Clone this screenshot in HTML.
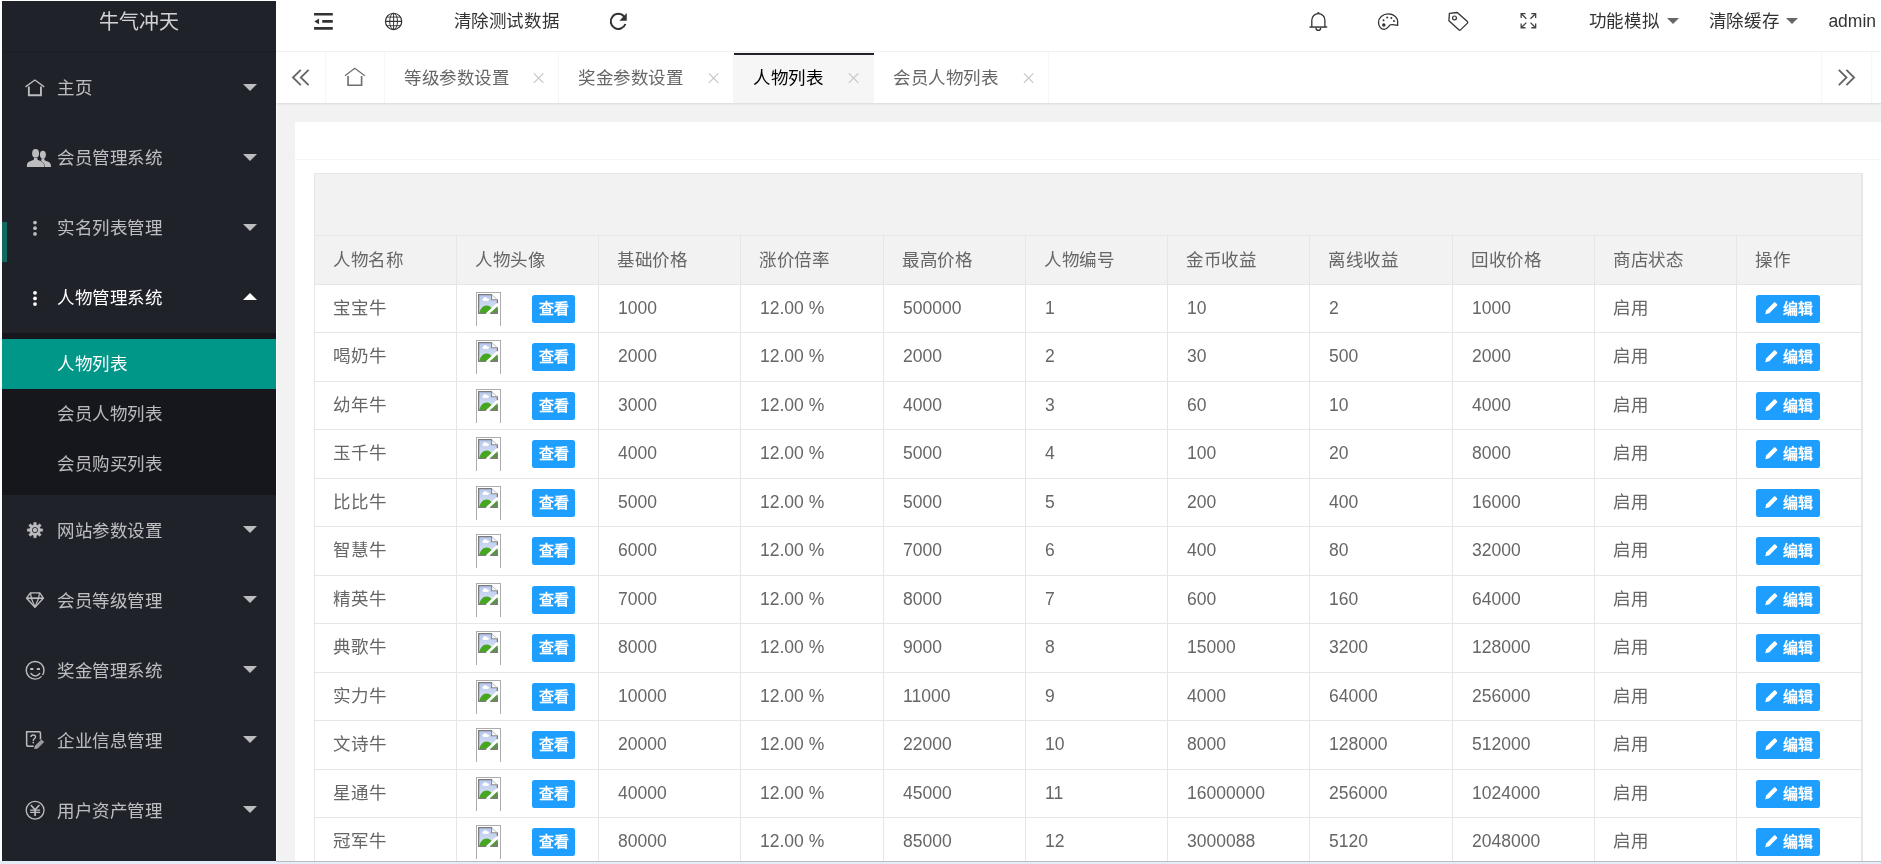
<!DOCTYPE html>
<html lang="zh-CN">
<head>
<meta charset="utf-8">
<title>人物列表</title>
<style>
*{box-sizing:border-box;margin:0;padding:0}
html,body{width:1881px;height:864px;overflow:hidden;background:#fff}
body{position:relative;font-family:"Liberation Sans",sans-serif;font-size:17.5px;color:#666;line-height:1;white-space:nowrap}
div,span,a,b,i{position:absolute;display:block;white-space:nowrap}
svg{position:absolute;display:block;overflow:visible}
.j{text-align:justify;text-align-last:justify}
.ov{left:0;top:0}
#side,#head,#tabs,#tbl{will-change:transform}
/* sidebar */
#side{z-index:4;left:2px;top:1px;width:274px;height:860px;background:#20222a;overflow:hidden}
#logo{left:0;top:0;width:274px;height:50px;font-size:20px;color:rgba(255,255,255,.8);box-shadow:0 1px 2px 0 rgba(0,0,0,.15)}
#logo .lt{left:96.7px;top:0;height:40px;line-height:40px}
.ni{left:0;width:274px;height:70px;color:rgba(255,255,255,.7)}
.ni .t{left:55px;top:0;height:70px;line-height:70px}
.ni .ar{left:240.8px;top:31.6px;width:0;height:0;border:7px solid transparent;border-top-color:rgba(255,255,255,.7);border-bottom-width:0}
.ni.open{color:#fff}
.ni.open .ar{top:31.2px;border:7px solid transparent;border-bottom-color:#fff;border-top-width:0}
#bar{left:0;top:221px;width:5px;height:40px;background:#14695f}
#child{left:0;top:331.5px;width:274px;height:162px;background:rgba(0,0,0,.3)}
.ci{left:0;width:274px;height:50px;line-height:50px;color:rgba(255,255,255,.7)}
.ci .t{left:55px;top:0;height:50px;line-height:50px}
.ci.on{background:#009688;color:#fff}
/* header */
#head{z-index:3;left:276px;top:0;width:1605px;height:52px;background:#fff;border-bottom:1px solid #f0f0f0;color:#333}
#head .t{top:0;height:42px;line-height:42px;color:#333}
.dar{top:17.9px;width:0;height:0;border:6.8px solid transparent;border-top-color:#666;border-bottom-width:0}
/* tabs */
#tabs{z-index:2;left:276px;top:52px;width:1605px;height:51px;background:#fff;box-shadow:0 1px 2px 0 rgba(0,0,0,.1)}
.tb{top:0;height:51px;border-right:1px solid #f6f6f6}
.tb .t{top:0;height:51px;line-height:51px;left:19px;color:#666}
.tb.on{background:#f6f6f6;border-right:0}
.tb.on .t{color:#000}
.tb.on .ln{left:0;top:1px;width:100%;height:2px;background:#20222a}
/* body */
#bg{left:277px;top:103px;width:1604px;height:758px;background:#f2f2f2}
#card{left:295px;top:122px;width:1586px;height:739px;background:#fff}
#chd{left:0;top:0;width:1586px;height:38px;border-bottom:1px solid #f6f6f6}
#tbl{left:314px;top:173px;width:1549px;height:700px;border:1px solid #e6e6e6;border-right-width:2px;background:#fff}
#tool{left:0;top:0;width:1546px;height:62px;background:#f2f2f2;border-bottom:1px solid #e6e6e6}
#thead{left:0;top:62px;width:1546px;height:49px;background:#f2f2f2;border-bottom:1px solid #e6e6e6}
.c{top:0;height:100%;border-right:1px solid #e6e6e6}
.c .t{left:19px;top:0;height:100%}
.c .j{left:18px}
#thead .t{line-height:49px}
.r{left:0;width:1546px;border-bottom:1px solid #e6e6e6}
.r .t{line-height:47px}
.btn{background:#1e9fff;color:#fff;border-radius:2.5px;font-size:15px;height:28px;line-height:28px;top:10px;font-weight:bold}
.bv{left:75px;width:43px}
.bv .t2{left:6.5px;top:0;line-height:28px}
.be{left:19px;width:64px}
.be .t2{left:27px;top:0;line-height:28px}
.img{left:19px;top:7px;width:25px;height:34px;border:1px solid #acacac;border-bottom:0;overflow:hidden}
/* bottom band */
#bot{left:0;top:861px;width:1881px;height:3px;background:#e4ecf7}
#botl{left:276px;top:861px;width:1605px;height:1px;background:#b9bdc3}
#wl{left:276px;top:103px;width:1px;height:758px;background:#fcfcfc}
.ni .j{margin-top:1px}
#logo .j{margin-top:.5px}
.tb .j{margin-top:1px}
</style>
</head>
<body>
<svg width="0" height="0"><defs><linearGradient id="sky" x1="0" y1="0" x2="0" y2="1"><stop offset="0" stop-color="#b4c7ec"/><stop offset="1" stop-color="#dfe6f6"/></linearGradient></defs></svg>
<div id="side">
<div id="logo"><span class="lt j" style="width:80px;">牛气冲天</span></div>
<div class="ni" style="top:51px"><span class="t j" style="width:35px;">主页</span><i class="ar"></i></div>
<div class="ni" style="top:121px"><span class="t j" style="width:105px;">会员管理系统</span><i class="ar"></i></div>
<div class="ni" style="top:191px"><span class="t j" style="width:105px;">实名列表管理</span><i class="ar"></i></div>
<div class="ni open" style="top:261px"><span class="t j" style="width:105px;">人物管理系统</span><i class="ar"></i></div>
<div class="ni" style="top:493.5px"><span class="t j" style="width:105px;">网站参数设置</span><i class="ar"></i></div>
<div class="ni" style="top:563.5px"><span class="t j" style="width:105px;">会员等级管理</span><i class="ar"></i></div>
<div class="ni" style="top:633.5px"><span class="t j" style="width:105px;">奖金管理系统</span><i class="ar"></i></div>
<div class="ni" style="top:703.5px"><span class="t j" style="width:105px;">企业信息管理</span><i class="ar"></i></div>
<div class="ni" style="top:773.5px"><span class="t j" style="width:105px;">用户资产管理</span><i class="ar"></i></div>
<div id="child">
<div class="ci on" style="top:6.5px"><span class="t j" style="width:70px;">人物列表</span></div>
<div class="ci" style="top:56.5px"><span class="t j" style="width:105px;">会员人物列表</span></div>
<div class="ci" style="top:106.5px"><span class="t j" style="width:105px;">会员购买列表</span></div>
</div>
<div id="bar"></div>
<svg class="ov" width="274" height="860" viewBox="2 1 274 860"><path d="M25.5 86.9 L34.85 80.05 L44.2 86.9" fill="none" stroke="#bdbdbf" stroke-width="1.35"/><path d="M28.85 86.5 V95.2 H40.95 V86.5" fill="none" stroke="#bdbdbf" stroke-width="1.85"/><g transform="translate(26.9 149.1)" fill="#bdbdbf"><ellipse cx="16" cy="5.5" rx="3" ry="3.95"/><path d="M8 18 C8 15 9 13.6 11 12.8 L14 11.6 C14.8 11.2 14.7 10.2 14.4 9.2 L17.7 9.2 C17.4 10.2 17.4 11.1 18.2 11.5 L21.3 12.7 C23.4 13.6 24.1 15 24.1 18 Z"/></g><g transform="translate(26.9 149.1)" fill="#bdbdbf" stroke="#20222a" stroke-width="0.9" paint-order="stroke"><ellipse cx="8.7" cy="4.3" rx="3.45" ry="4.3"/><path d="M0.05 18 C0.05 14.7 0.3 13.5 2.6 12.5 L6.4 11 C7.2 10.6 7.2 9.6 6.9 8.4 L10.6 8.4 C10.3 9.6 10.4 10.6 11.2 11 L13.6 11.9 C15.9 12.9 17.3 14.5 17.45 18 Z"/></g><circle cx="35" cy="222.6" r="1.88" fill="#bdbdbf"/><circle cx="35" cy="228.2" r="1.88" fill="#bdbdbf"/><circle cx="35" cy="233.9" r="1.88" fill="#bdbdbf"/><circle cx="35" cy="292.8" r="1.88" fill="#fff"/><circle cx="35" cy="298.4" r="1.88" fill="#fff"/><circle cx="35" cy="304.1" r="1.88" fill="#fff"/><path d="M33.73 524.8 L33.79 522.45 L36.21 522.45 L36.27 524.8 L37.85 525.45 L39.56 523.83 L41.27 525.54 L39.65 527.25 L40.3 528.83 L42.65 528.89 L42.65 531.31 L40.3 531.37 L39.65 532.95 L41.27 534.66 L39.56 536.37 L37.85 534.75 L36.27 535.4 L36.21 537.75 L33.79 537.75 L33.73 535.4 L32.15 534.75 L30.44 536.37 L28.73 534.66 L30.35 532.95 L29.7 531.37 L27.35 531.31 L27.35 528.89 L29.7 528.83 L30.35 527.25 L28.73 525.54 L30.44 523.83 L32.15 525.45Z" fill="#bdbdbf" stroke="#bdbdbf" stroke-width="0.5" stroke-linejoin="round"/><circle cx="35" cy="530.1" r="2.65" fill="none" stroke="#20222a" stroke-width="0.85"/><path d="M30.4 592.85 H39.7 L43.4 598.2 L34.95 607.3 L26.6 598.2 Z" fill="none" stroke="#bdbdbf" stroke-width="1.35" stroke-linejoin="round"/><path d="M26.8 598.2 H43.2" fill="none" stroke="#bdbdbf" stroke-width="1.7"/><path d="M31.3 598.2 L34.95 606.9 L38.6 598.2" fill="none" stroke="#bdbdbf" stroke-width="1.25" stroke-linejoin="round"/><path d="M30.6 593 L31.3 598.2 M39.5 593 L38.6 598.2" fill="none" stroke="#bdbdbf" stroke-width="1.25"/><circle cx="35.1" cy="670.3" r="8.85" fill="none" stroke="#bdbdbf" stroke-width="1.4" stroke-dasharray="54.01 1.6" stroke-dashoffset="-6.67"/><rect x="30.200000000000003" y="668" width="3.2" height="1.95" rx="0.5" fill="#bdbdbf"/><rect x="36.800000000000004" y="668" width="3.2" height="1.95" rx="0.5" fill="#bdbdbf"/><path d="M31 673.5 Q35.300000000000004 678.5 39.7 673.5" fill="none" stroke="#bdbdbf" stroke-width="1.4" stroke-linecap="round"/><path d="M26.65 731.65 H39.1 Q40.45 731.65 40.45 733 V739.4" fill="none" stroke="#bdbdbf" stroke-width="1.5"/><path d="M26.65 731 V744.4 Q26.65 746.3 28.55 746.3 H33.7" fill="none" stroke="#bdbdbf" stroke-width="1.5"/><path d="M30.95 736.9 Q30.95 734.95 33.25 734.95 Q35.55 734.95 35.55 736.85 Q35.55 738 34.3 738.8 Q33.25 739.5 33.25 740.9" fill="none" stroke="#bdbdbf" stroke-width="1.35"/><circle cx="33.25" cy="742.6" r="0.85" fill="#bdbdbf"/><path d="M34.1 749.1 L35.1 745.8 L41.5 739.5 L44.1 742.1 L37.6 748.5 Z" fill="#bdbdbf" fill-opacity=".88"/><path d="M36.3 746.6 L42.4 740.5 M37.4 747.7 L43.4 741.7" fill="none" stroke="#20222a" stroke-width="0.45" stroke-opacity=".55"/><circle cx="35.1" cy="810.25" r="8.9" fill="none" stroke="#bdbdbf" stroke-width="1.3"/><path d="M30.8 804.95 L35.1 809.85 L39.4 804.95" fill="none" stroke="#bdbdbf" stroke-width="1.6"/><path d="M35.1 809.65 V816.05" fill="none" stroke="#bdbdbf" stroke-width="1.7"/><path d="M30.1 810.15 H40.1 M30.1 812.35 H40.1" fill="none" stroke="#bdbdbf" stroke-width="1.25"/></svg>
</div>
<div id="head">
<span class="t j" style="width:105px;left:177.7px">清除测试数据</span><span class="t j" style="width:70px;left:1312.5px">功能模拟</span><i class="dar" style="left:1390.5px"></i><span class="t j" style="width:70px;left:1432.6px">清除缓存</span><i class="dar" style="left:1510.4px"></i><span class="t" style="left:1552.4px">admin</span>
<svg class="ov" width="1605" height="52" viewBox="276 0 1605 52"><path d="M314.05 14.2 H332.8 M322.25 21.35 H332.8 M314.05 28.4 H332.8" fill="none" stroke="#333" stroke-width="2.65"/><path d="M314.3 21.45 L319.05 18.6 V24.2 Z" fill="#333"/><g fill="none" stroke="#333" stroke-width="1.2"><circle cx="393.6" cy="21.4" r="8.15"/><ellipse cx="393.6" cy="21.4" rx="3.9" ry="8.15" stroke-width="1"/><path d="M393.6 13.249999999999998 V29.549999999999997" stroke-width="1"/><path d="M385.45000000000005 21.4 H401.75" stroke-width="1.25"/><path d="M386.70000000000005 17.099999999999998 H400.5 M386.70000000000005 25.7 H400.5" stroke-width="0.9"/></g><path d="M625.4 23.98 A7.55 7.55 0 1 1 624.08 16.55" fill="none" stroke="#333" stroke-width="2"/><path d="M619.4 20.65 L626.75 20.65 L626.75 13.1 Z" fill="#333"/><g transform="translate(1309.4 12.2)" fill="none" stroke="#333" stroke-width="1.3"><path d="M2.4 14.8 V8 A6.55 6.55 0 0 1 15.5 8 V14.8"/><path d="M0.1 14.85 H17.8" stroke-width="1.45"/><path d="M6.6 15.5 A2.35 2.7 0 0 0 11.3 15.5"/><path d="M8.95 0 V1.6" stroke-width="1.9"/></g><g transform="translate(1377.8 13.2)"><path fill="none" stroke="#333" stroke-width="1.3" d="M19.8 9.6 C20.4 5 16.5 0.7 10.6 0.7 C4.7 0.7 0.7 4.6 0.7 9.3 C0.7 13.2 3.2 16.1 6.4 16.1 C9.7 16.1 10.4 13.4 12.2 11.9 C14 10.5 16.2 11.9 19.8 12.2 Z"/><circle cx="6" cy="11.9" r="1.75" fill="#333"/><circle cx="5.7" cy="7.1" r="1" fill="#333"/><circle cx="9.4" cy="4.2" r="1" fill="#333"/><circle cx="13.6" cy="4.7" r="1" fill="#333"/><circle cx="16.2" cy="7.9" r="1" fill="#333"/></g><g transform="translate(1448.2 11.8)" fill="none" stroke="#333"><path stroke-width="1.3" stroke-linejoin="round" d="M1.2 1.5 L9 0.7 L19.2 9.8 Q20 10.6 19.3 11.3 L12.3 18.1 Q11.6 18.8 10.9 18.1 L0.7 8.9 Z"/><circle cx="6.3" cy="6.1" r="1.9" stroke-width="1.2"/></g><g transform="translate(1520.5 12.9)" fill="none" stroke="#444" stroke-width="1.3"><path d="M0.65 5 V0.65 H5 M0.9 0.9 L5.8 5.8"/><path d="M10.8 0.65 H15.15 V5 M14.9 0.9 L10 5.8"/><path d="M0.65 10.5 V14.85 H5 M0.9 14.6 L5.8 9.7"/><path d="M15.15 10.5 V14.85 H10.8 M14.9 14.6 L10 9.7"/></g></svg>
</div>
<div id="tabs">
<div class="tb" style="left:0px;width:50px"></div>
<div class="tb" style="left:50px;width:59px"></div>
<div class="tb" style="left:109px;width:174px"><span class="t j" style="width:105px;">等级参数设置</span></div>
<div class="tb" style="left:283px;width:175px"><span class="t j" style="width:105px;">奖金参数设置</span></div>
<div class="tb on" style="left:458px;width:140px"><span class="t j" style="width:70px;">人物列表</span><i class="ln"></i></div>
<div class="tb" style="left:598px;width:175px"><span class="t j" style="width:105px;">会员人物列表</span></div>
<div class="tb" style="left:1545px;width:51px;border-left:1px solid #f6f6f6"></div>
<svg class="ov" width="1605" height="51" viewBox="276 52 1605 51"><path d="M300.8 69.9 L293 77.5 L300.8 85.1 M308.6 69.9 L300.8 77.5 L308.6 85.1" fill="none" stroke="#666" stroke-width="1.85"/><path d="M345 75.75 L354.75 68.35 L364.8 75.75" fill="none" stroke="#6e6e6e" stroke-width="1.2"/><path d="M348.05 76 V85.3 H361.6 V76" fill="none" stroke="#6e6e6e" stroke-width="1.6"/><path d="M1838.8 69.9 L1846.5 77.5 L1838.8 85.1 M1846.3999999999999 69.9 L1854.1 77.5 L1846.3999999999999 85.1" fill="none" stroke="#666" stroke-width="1.85"/><path d="M533.85 73.45 L543.35 82.95 M543.35 73.45 L533.85 82.95" fill="none" stroke="#c6c6c6" stroke-width="1.15"/><path d="M708.85 73.45 L718.35 82.95 M718.35 73.45 L708.85 82.95" fill="none" stroke="#c6c6c6" stroke-width="1.15"/><path d="M848.85 73.45 L858.35 82.95 M858.35 73.45 L848.85 82.95" fill="none" stroke="#c6c6c6" stroke-width="1.15"/><path d="M1023.8499999999999 73.45 L1033.35 82.95 M1033.35 73.45 L1023.8499999999999 82.95" fill="none" stroke="#c6c6c6" stroke-width="1.15"/></svg>
</div>
<div id="wl"></div><div id="bg"></div>
<div id="card"><div id="chd"></div></div>
<div id="tbl">
<div id="tool"></div>
<div id="thead"><div class="c" style="left:0px;width:142px"><span class="t j" style="width:70px;">人物名称</span></div><div class="c" style="left:142px;width:142px"><span class="t j" style="width:70px;">人物头像</span></div><div class="c" style="left:284px;width:142px"><span class="t j" style="width:70px;">基础价格</span></div><div class="c" style="left:426px;width:143px"><span class="t j" style="width:70px;">涨价倍率</span></div><div class="c" style="left:569px;width:142px"><span class="t j" style="width:70px;">最高价格</span></div><div class="c" style="left:711px;width:142px"><span class="t j" style="width:70px;">人物编号</span></div><div class="c" style="left:853px;width:142px"><span class="t j" style="width:70px;">金币收益</span></div><div class="c" style="left:995px;width:143px"><span class="t j" style="width:70px;">离线收益</span></div><div class="c" style="left:1138px;width:142px"><span class="t j" style="width:70px;">回收价格</span></div><div class="c" style="left:1280px;width:142px"><span class="t j" style="width:70px;">商店状态</span></div><div class="c" style="left:1422px;width:126px;border-right:0"><span class="t j" style="width:35px;">操作</span></div></div>
<div class="r" style="top:111px;height:48px"><div class="c" style="left:0px;width:142px"><span class="t j" style="width:52.5px;">宝宝牛</span></div><div class="c" style="left:142px;width:142px"><div class="img"><svg width="20" height="20" viewBox="0 0 20 20" style="left:1px;top:1px"><path d="M0.6 0.6 H13.6 L19.4 5.9 V19.4 H0.6 Z" fill="url(#sky)"/><ellipse cx="7.7" cy="5.7" rx="3.3" ry="1.35" fill="#fff"/><ellipse cx="7.2" cy="4.5" rx="1.9" ry="1.3" fill="#fff"/><path d="M1.2 19.4 C2 14.5 5 11.4 8.6 11.4 C11.4 11.4 13.6 13.2 14.8 15.6 L19.4 12 V19.4 Z" fill="#46a622"/><path d="M13.2 19.4 L19.4 13 V19.4 Z" fill="#5f8f4e"/><path d="M8.6 20.6 L20.4 9.4" stroke="#fff" stroke-width="2.7" fill="none"/><path d="M13.6 0.6 V5.9 H19.4 Z" fill="#fff"/><path d="M13.6 0.3 V5.7 H19.7" fill="none" stroke="#8a8a8a" stroke-width="1.15"/><path d="M13.7 0.7 L19.3 5.8" fill="none" stroke="#b9b9b9" stroke-width="0.9"/><path d="M13.9 0.65 H0.65 V19.35 H8.2" fill="none" stroke="#7b7b7b" stroke-width="1.25"/><path d="M12.4 19.35 H19.35 V14.3 M19.35 5.4 V9.2" fill="none" stroke="#7b7b7b" stroke-width="1.25"/></svg></div><a class="btn bv"><span class="t2 j" style="width:30px;">查看</span></a></div><div class="c" style="left:284px;width:142px"><span class="t">1000</span></div><div class="c" style="left:426px;width:143px"><span class="t">12.00 %</span></div><div class="c" style="left:569px;width:142px"><span class="t">500000</span></div><div class="c" style="left:711px;width:142px"><span class="t">1</span></div><div class="c" style="left:853px;width:142px"><span class="t">10</span></div><div class="c" style="left:995px;width:143px"><span class="t">2</span></div><div class="c" style="left:1138px;width:142px"><span class="t">1000</span></div><div class="c" style="left:1280px;width:142px"><span class="t j" style="width:35px;">启用</span></div><div class="c" style="left:1422px;width:126px;border-right:0"><a class="btn be"><svg width="12.5" height="12.5" viewBox="0 0 12.5 12.5" style="left:9px;top:7.3px"><path fill="#fff" d="M0.2 12.3 L1.3 8.3 L9 0.6 Q9.7 0 10.4 0.6 L12 2.2 Q12.6 2.9 12 3.6 L4.3 11.3 Z"/></svg><span class="t2 j" style="width:30px;">编辑</span></a></div></div>
<div class="r" style="top:159px;height:49px"><div class="c" style="left:0px;width:142px"><span class="t j" style="width:52.5px;">喝奶牛</span></div><div class="c" style="left:142px;width:142px"><div class="img"><svg width="20" height="20" viewBox="0 0 20 20" style="left:1px;top:1px"><path d="M0.6 0.6 H13.6 L19.4 5.9 V19.4 H0.6 Z" fill="url(#sky)"/><ellipse cx="7.7" cy="5.7" rx="3.3" ry="1.35" fill="#fff"/><ellipse cx="7.2" cy="4.5" rx="1.9" ry="1.3" fill="#fff"/><path d="M1.2 19.4 C2 14.5 5 11.4 8.6 11.4 C11.4 11.4 13.6 13.2 14.8 15.6 L19.4 12 V19.4 Z" fill="#46a622"/><path d="M13.2 19.4 L19.4 13 V19.4 Z" fill="#5f8f4e"/><path d="M8.6 20.6 L20.4 9.4" stroke="#fff" stroke-width="2.7" fill="none"/><path d="M13.6 0.6 V5.9 H19.4 Z" fill="#fff"/><path d="M13.6 0.3 V5.7 H19.7" fill="none" stroke="#8a8a8a" stroke-width="1.15"/><path d="M13.7 0.7 L19.3 5.8" fill="none" stroke="#b9b9b9" stroke-width="0.9"/><path d="M13.9 0.65 H0.65 V19.35 H8.2" fill="none" stroke="#7b7b7b" stroke-width="1.25"/><path d="M12.4 19.35 H19.35 V14.3 M19.35 5.4 V9.2" fill="none" stroke="#7b7b7b" stroke-width="1.25"/></svg></div><a class="btn bv"><span class="t2 j" style="width:30px;">查看</span></a></div><div class="c" style="left:284px;width:142px"><span class="t">2000</span></div><div class="c" style="left:426px;width:143px"><span class="t">12.00 %</span></div><div class="c" style="left:569px;width:142px"><span class="t">2000</span></div><div class="c" style="left:711px;width:142px"><span class="t">2</span></div><div class="c" style="left:853px;width:142px"><span class="t">30</span></div><div class="c" style="left:995px;width:143px"><span class="t">500</span></div><div class="c" style="left:1138px;width:142px"><span class="t">2000</span></div><div class="c" style="left:1280px;width:142px"><span class="t j" style="width:35px;">启用</span></div><div class="c" style="left:1422px;width:126px;border-right:0"><a class="btn be"><svg width="12.5" height="12.5" viewBox="0 0 12.5 12.5" style="left:9px;top:7.3px"><path fill="#fff" d="M0.2 12.3 L1.3 8.3 L9 0.6 Q9.7 0 10.4 0.6 L12 2.2 Q12.6 2.9 12 3.6 L4.3 11.3 Z"/></svg><span class="t2 j" style="width:30px;">编辑</span></a></div></div>
<div class="r" style="top:208px;height:48px"><div class="c" style="left:0px;width:142px"><span class="t j" style="width:52.5px;">幼年牛</span></div><div class="c" style="left:142px;width:142px"><div class="img"><svg width="20" height="20" viewBox="0 0 20 20" style="left:1px;top:1px"><path d="M0.6 0.6 H13.6 L19.4 5.9 V19.4 H0.6 Z" fill="url(#sky)"/><ellipse cx="7.7" cy="5.7" rx="3.3" ry="1.35" fill="#fff"/><ellipse cx="7.2" cy="4.5" rx="1.9" ry="1.3" fill="#fff"/><path d="M1.2 19.4 C2 14.5 5 11.4 8.6 11.4 C11.4 11.4 13.6 13.2 14.8 15.6 L19.4 12 V19.4 Z" fill="#46a622"/><path d="M13.2 19.4 L19.4 13 V19.4 Z" fill="#5f8f4e"/><path d="M8.6 20.6 L20.4 9.4" stroke="#fff" stroke-width="2.7" fill="none"/><path d="M13.6 0.6 V5.9 H19.4 Z" fill="#fff"/><path d="M13.6 0.3 V5.7 H19.7" fill="none" stroke="#8a8a8a" stroke-width="1.15"/><path d="M13.7 0.7 L19.3 5.8" fill="none" stroke="#b9b9b9" stroke-width="0.9"/><path d="M13.9 0.65 H0.65 V19.35 H8.2" fill="none" stroke="#7b7b7b" stroke-width="1.25"/><path d="M12.4 19.35 H19.35 V14.3 M19.35 5.4 V9.2" fill="none" stroke="#7b7b7b" stroke-width="1.25"/></svg></div><a class="btn bv"><span class="t2 j" style="width:30px;">查看</span></a></div><div class="c" style="left:284px;width:142px"><span class="t">3000</span></div><div class="c" style="left:426px;width:143px"><span class="t">12.00 %</span></div><div class="c" style="left:569px;width:142px"><span class="t">4000</span></div><div class="c" style="left:711px;width:142px"><span class="t">3</span></div><div class="c" style="left:853px;width:142px"><span class="t">60</span></div><div class="c" style="left:995px;width:143px"><span class="t">10</span></div><div class="c" style="left:1138px;width:142px"><span class="t">4000</span></div><div class="c" style="left:1280px;width:142px"><span class="t j" style="width:35px;">启用</span></div><div class="c" style="left:1422px;width:126px;border-right:0"><a class="btn be"><svg width="12.5" height="12.5" viewBox="0 0 12.5 12.5" style="left:9px;top:7.3px"><path fill="#fff" d="M0.2 12.3 L1.3 8.3 L9 0.6 Q9.7 0 10.4 0.6 L12 2.2 Q12.6 2.9 12 3.6 L4.3 11.3 Z"/></svg><span class="t2 j" style="width:30px;">编辑</span></a></div></div>
<div class="r" style="top:256px;height:49px"><div class="c" style="left:0px;width:142px"><span class="t j" style="width:52.5px;">玉千牛</span></div><div class="c" style="left:142px;width:142px"><div class="img"><svg width="20" height="20" viewBox="0 0 20 20" style="left:1px;top:1px"><path d="M0.6 0.6 H13.6 L19.4 5.9 V19.4 H0.6 Z" fill="url(#sky)"/><ellipse cx="7.7" cy="5.7" rx="3.3" ry="1.35" fill="#fff"/><ellipse cx="7.2" cy="4.5" rx="1.9" ry="1.3" fill="#fff"/><path d="M1.2 19.4 C2 14.5 5 11.4 8.6 11.4 C11.4 11.4 13.6 13.2 14.8 15.6 L19.4 12 V19.4 Z" fill="#46a622"/><path d="M13.2 19.4 L19.4 13 V19.4 Z" fill="#5f8f4e"/><path d="M8.6 20.6 L20.4 9.4" stroke="#fff" stroke-width="2.7" fill="none"/><path d="M13.6 0.6 V5.9 H19.4 Z" fill="#fff"/><path d="M13.6 0.3 V5.7 H19.7" fill="none" stroke="#8a8a8a" stroke-width="1.15"/><path d="M13.7 0.7 L19.3 5.8" fill="none" stroke="#b9b9b9" stroke-width="0.9"/><path d="M13.9 0.65 H0.65 V19.35 H8.2" fill="none" stroke="#7b7b7b" stroke-width="1.25"/><path d="M12.4 19.35 H19.35 V14.3 M19.35 5.4 V9.2" fill="none" stroke="#7b7b7b" stroke-width="1.25"/></svg></div><a class="btn bv"><span class="t2 j" style="width:30px;">查看</span></a></div><div class="c" style="left:284px;width:142px"><span class="t">4000</span></div><div class="c" style="left:426px;width:143px"><span class="t">12.00 %</span></div><div class="c" style="left:569px;width:142px"><span class="t">5000</span></div><div class="c" style="left:711px;width:142px"><span class="t">4</span></div><div class="c" style="left:853px;width:142px"><span class="t">100</span></div><div class="c" style="left:995px;width:143px"><span class="t">20</span></div><div class="c" style="left:1138px;width:142px"><span class="t">8000</span></div><div class="c" style="left:1280px;width:142px"><span class="t j" style="width:35px;">启用</span></div><div class="c" style="left:1422px;width:126px;border-right:0"><a class="btn be"><svg width="12.5" height="12.5" viewBox="0 0 12.5 12.5" style="left:9px;top:7.3px"><path fill="#fff" d="M0.2 12.3 L1.3 8.3 L9 0.6 Q9.7 0 10.4 0.6 L12 2.2 Q12.6 2.9 12 3.6 L4.3 11.3 Z"/></svg><span class="t2 j" style="width:30px;">编辑</span></a></div></div>
<div class="r" style="top:305px;height:48px"><div class="c" style="left:0px;width:142px"><span class="t j" style="width:52.5px;">比比牛</span></div><div class="c" style="left:142px;width:142px"><div class="img"><svg width="20" height="20" viewBox="0 0 20 20" style="left:1px;top:1px"><path d="M0.6 0.6 H13.6 L19.4 5.9 V19.4 H0.6 Z" fill="url(#sky)"/><ellipse cx="7.7" cy="5.7" rx="3.3" ry="1.35" fill="#fff"/><ellipse cx="7.2" cy="4.5" rx="1.9" ry="1.3" fill="#fff"/><path d="M1.2 19.4 C2 14.5 5 11.4 8.6 11.4 C11.4 11.4 13.6 13.2 14.8 15.6 L19.4 12 V19.4 Z" fill="#46a622"/><path d="M13.2 19.4 L19.4 13 V19.4 Z" fill="#5f8f4e"/><path d="M8.6 20.6 L20.4 9.4" stroke="#fff" stroke-width="2.7" fill="none"/><path d="M13.6 0.6 V5.9 H19.4 Z" fill="#fff"/><path d="M13.6 0.3 V5.7 H19.7" fill="none" stroke="#8a8a8a" stroke-width="1.15"/><path d="M13.7 0.7 L19.3 5.8" fill="none" stroke="#b9b9b9" stroke-width="0.9"/><path d="M13.9 0.65 H0.65 V19.35 H8.2" fill="none" stroke="#7b7b7b" stroke-width="1.25"/><path d="M12.4 19.35 H19.35 V14.3 M19.35 5.4 V9.2" fill="none" stroke="#7b7b7b" stroke-width="1.25"/></svg></div><a class="btn bv"><span class="t2 j" style="width:30px;">查看</span></a></div><div class="c" style="left:284px;width:142px"><span class="t">5000</span></div><div class="c" style="left:426px;width:143px"><span class="t">12.00 %</span></div><div class="c" style="left:569px;width:142px"><span class="t">5000</span></div><div class="c" style="left:711px;width:142px"><span class="t">5</span></div><div class="c" style="left:853px;width:142px"><span class="t">200</span></div><div class="c" style="left:995px;width:143px"><span class="t">400</span></div><div class="c" style="left:1138px;width:142px"><span class="t">16000</span></div><div class="c" style="left:1280px;width:142px"><span class="t j" style="width:35px;">启用</span></div><div class="c" style="left:1422px;width:126px;border-right:0"><a class="btn be"><svg width="12.5" height="12.5" viewBox="0 0 12.5 12.5" style="left:9px;top:7.3px"><path fill="#fff" d="M0.2 12.3 L1.3 8.3 L9 0.6 Q9.7 0 10.4 0.6 L12 2.2 Q12.6 2.9 12 3.6 L4.3 11.3 Z"/></svg><span class="t2 j" style="width:30px;">编辑</span></a></div></div>
<div class="r" style="top:353px;height:49px"><div class="c" style="left:0px;width:142px"><span class="t j" style="width:52.5px;">智慧牛</span></div><div class="c" style="left:142px;width:142px"><div class="img"><svg width="20" height="20" viewBox="0 0 20 20" style="left:1px;top:1px"><path d="M0.6 0.6 H13.6 L19.4 5.9 V19.4 H0.6 Z" fill="url(#sky)"/><ellipse cx="7.7" cy="5.7" rx="3.3" ry="1.35" fill="#fff"/><ellipse cx="7.2" cy="4.5" rx="1.9" ry="1.3" fill="#fff"/><path d="M1.2 19.4 C2 14.5 5 11.4 8.6 11.4 C11.4 11.4 13.6 13.2 14.8 15.6 L19.4 12 V19.4 Z" fill="#46a622"/><path d="M13.2 19.4 L19.4 13 V19.4 Z" fill="#5f8f4e"/><path d="M8.6 20.6 L20.4 9.4" stroke="#fff" stroke-width="2.7" fill="none"/><path d="M13.6 0.6 V5.9 H19.4 Z" fill="#fff"/><path d="M13.6 0.3 V5.7 H19.7" fill="none" stroke="#8a8a8a" stroke-width="1.15"/><path d="M13.7 0.7 L19.3 5.8" fill="none" stroke="#b9b9b9" stroke-width="0.9"/><path d="M13.9 0.65 H0.65 V19.35 H8.2" fill="none" stroke="#7b7b7b" stroke-width="1.25"/><path d="M12.4 19.35 H19.35 V14.3 M19.35 5.4 V9.2" fill="none" stroke="#7b7b7b" stroke-width="1.25"/></svg></div><a class="btn bv"><span class="t2 j" style="width:30px;">查看</span></a></div><div class="c" style="left:284px;width:142px"><span class="t">6000</span></div><div class="c" style="left:426px;width:143px"><span class="t">12.00 %</span></div><div class="c" style="left:569px;width:142px"><span class="t">7000</span></div><div class="c" style="left:711px;width:142px"><span class="t">6</span></div><div class="c" style="left:853px;width:142px"><span class="t">400</span></div><div class="c" style="left:995px;width:143px"><span class="t">80</span></div><div class="c" style="left:1138px;width:142px"><span class="t">32000</span></div><div class="c" style="left:1280px;width:142px"><span class="t j" style="width:35px;">启用</span></div><div class="c" style="left:1422px;width:126px;border-right:0"><a class="btn be"><svg width="12.5" height="12.5" viewBox="0 0 12.5 12.5" style="left:9px;top:7.3px"><path fill="#fff" d="M0.2 12.3 L1.3 8.3 L9 0.6 Q9.7 0 10.4 0.6 L12 2.2 Q12.6 2.9 12 3.6 L4.3 11.3 Z"/></svg><span class="t2 j" style="width:30px;">编辑</span></a></div></div>
<div class="r" style="top:402px;height:48px"><div class="c" style="left:0px;width:142px"><span class="t j" style="width:52.5px;">精英牛</span></div><div class="c" style="left:142px;width:142px"><div class="img"><svg width="20" height="20" viewBox="0 0 20 20" style="left:1px;top:1px"><path d="M0.6 0.6 H13.6 L19.4 5.9 V19.4 H0.6 Z" fill="url(#sky)"/><ellipse cx="7.7" cy="5.7" rx="3.3" ry="1.35" fill="#fff"/><ellipse cx="7.2" cy="4.5" rx="1.9" ry="1.3" fill="#fff"/><path d="M1.2 19.4 C2 14.5 5 11.4 8.6 11.4 C11.4 11.4 13.6 13.2 14.8 15.6 L19.4 12 V19.4 Z" fill="#46a622"/><path d="M13.2 19.4 L19.4 13 V19.4 Z" fill="#5f8f4e"/><path d="M8.6 20.6 L20.4 9.4" stroke="#fff" stroke-width="2.7" fill="none"/><path d="M13.6 0.6 V5.9 H19.4 Z" fill="#fff"/><path d="M13.6 0.3 V5.7 H19.7" fill="none" stroke="#8a8a8a" stroke-width="1.15"/><path d="M13.7 0.7 L19.3 5.8" fill="none" stroke="#b9b9b9" stroke-width="0.9"/><path d="M13.9 0.65 H0.65 V19.35 H8.2" fill="none" stroke="#7b7b7b" stroke-width="1.25"/><path d="M12.4 19.35 H19.35 V14.3 M19.35 5.4 V9.2" fill="none" stroke="#7b7b7b" stroke-width="1.25"/></svg></div><a class="btn bv"><span class="t2 j" style="width:30px;">查看</span></a></div><div class="c" style="left:284px;width:142px"><span class="t">7000</span></div><div class="c" style="left:426px;width:143px"><span class="t">12.00 %</span></div><div class="c" style="left:569px;width:142px"><span class="t">8000</span></div><div class="c" style="left:711px;width:142px"><span class="t">7</span></div><div class="c" style="left:853px;width:142px"><span class="t">600</span></div><div class="c" style="left:995px;width:143px"><span class="t">160</span></div><div class="c" style="left:1138px;width:142px"><span class="t">64000</span></div><div class="c" style="left:1280px;width:142px"><span class="t j" style="width:35px;">启用</span></div><div class="c" style="left:1422px;width:126px;border-right:0"><a class="btn be"><svg width="12.5" height="12.5" viewBox="0 0 12.5 12.5" style="left:9px;top:7.3px"><path fill="#fff" d="M0.2 12.3 L1.3 8.3 L9 0.6 Q9.7 0 10.4 0.6 L12 2.2 Q12.6 2.9 12 3.6 L4.3 11.3 Z"/></svg><span class="t2 j" style="width:30px;">编辑</span></a></div></div>
<div class="r" style="top:450px;height:49px"><div class="c" style="left:0px;width:142px"><span class="t j" style="width:52.5px;">典歌牛</span></div><div class="c" style="left:142px;width:142px"><div class="img"><svg width="20" height="20" viewBox="0 0 20 20" style="left:1px;top:1px"><path d="M0.6 0.6 H13.6 L19.4 5.9 V19.4 H0.6 Z" fill="url(#sky)"/><ellipse cx="7.7" cy="5.7" rx="3.3" ry="1.35" fill="#fff"/><ellipse cx="7.2" cy="4.5" rx="1.9" ry="1.3" fill="#fff"/><path d="M1.2 19.4 C2 14.5 5 11.4 8.6 11.4 C11.4 11.4 13.6 13.2 14.8 15.6 L19.4 12 V19.4 Z" fill="#46a622"/><path d="M13.2 19.4 L19.4 13 V19.4 Z" fill="#5f8f4e"/><path d="M8.6 20.6 L20.4 9.4" stroke="#fff" stroke-width="2.7" fill="none"/><path d="M13.6 0.6 V5.9 H19.4 Z" fill="#fff"/><path d="M13.6 0.3 V5.7 H19.7" fill="none" stroke="#8a8a8a" stroke-width="1.15"/><path d="M13.7 0.7 L19.3 5.8" fill="none" stroke="#b9b9b9" stroke-width="0.9"/><path d="M13.9 0.65 H0.65 V19.35 H8.2" fill="none" stroke="#7b7b7b" stroke-width="1.25"/><path d="M12.4 19.35 H19.35 V14.3 M19.35 5.4 V9.2" fill="none" stroke="#7b7b7b" stroke-width="1.25"/></svg></div><a class="btn bv"><span class="t2 j" style="width:30px;">查看</span></a></div><div class="c" style="left:284px;width:142px"><span class="t">8000</span></div><div class="c" style="left:426px;width:143px"><span class="t">12.00 %</span></div><div class="c" style="left:569px;width:142px"><span class="t">9000</span></div><div class="c" style="left:711px;width:142px"><span class="t">8</span></div><div class="c" style="left:853px;width:142px"><span class="t">15000</span></div><div class="c" style="left:995px;width:143px"><span class="t">3200</span></div><div class="c" style="left:1138px;width:142px"><span class="t">128000</span></div><div class="c" style="left:1280px;width:142px"><span class="t j" style="width:35px;">启用</span></div><div class="c" style="left:1422px;width:126px;border-right:0"><a class="btn be"><svg width="12.5" height="12.5" viewBox="0 0 12.5 12.5" style="left:9px;top:7.3px"><path fill="#fff" d="M0.2 12.3 L1.3 8.3 L9 0.6 Q9.7 0 10.4 0.6 L12 2.2 Q12.6 2.9 12 3.6 L4.3 11.3 Z"/></svg><span class="t2 j" style="width:30px;">编辑</span></a></div></div>
<div class="r" style="top:499px;height:48px"><div class="c" style="left:0px;width:142px"><span class="t j" style="width:52.5px;">实力牛</span></div><div class="c" style="left:142px;width:142px"><div class="img"><svg width="20" height="20" viewBox="0 0 20 20" style="left:1px;top:1px"><path d="M0.6 0.6 H13.6 L19.4 5.9 V19.4 H0.6 Z" fill="url(#sky)"/><ellipse cx="7.7" cy="5.7" rx="3.3" ry="1.35" fill="#fff"/><ellipse cx="7.2" cy="4.5" rx="1.9" ry="1.3" fill="#fff"/><path d="M1.2 19.4 C2 14.5 5 11.4 8.6 11.4 C11.4 11.4 13.6 13.2 14.8 15.6 L19.4 12 V19.4 Z" fill="#46a622"/><path d="M13.2 19.4 L19.4 13 V19.4 Z" fill="#5f8f4e"/><path d="M8.6 20.6 L20.4 9.4" stroke="#fff" stroke-width="2.7" fill="none"/><path d="M13.6 0.6 V5.9 H19.4 Z" fill="#fff"/><path d="M13.6 0.3 V5.7 H19.7" fill="none" stroke="#8a8a8a" stroke-width="1.15"/><path d="M13.7 0.7 L19.3 5.8" fill="none" stroke="#b9b9b9" stroke-width="0.9"/><path d="M13.9 0.65 H0.65 V19.35 H8.2" fill="none" stroke="#7b7b7b" stroke-width="1.25"/><path d="M12.4 19.35 H19.35 V14.3 M19.35 5.4 V9.2" fill="none" stroke="#7b7b7b" stroke-width="1.25"/></svg></div><a class="btn bv"><span class="t2 j" style="width:30px;">查看</span></a></div><div class="c" style="left:284px;width:142px"><span class="t">10000</span></div><div class="c" style="left:426px;width:143px"><span class="t">12.00 %</span></div><div class="c" style="left:569px;width:142px"><span class="t">11000</span></div><div class="c" style="left:711px;width:142px"><span class="t">9</span></div><div class="c" style="left:853px;width:142px"><span class="t">4000</span></div><div class="c" style="left:995px;width:143px"><span class="t">64000</span></div><div class="c" style="left:1138px;width:142px"><span class="t">256000</span></div><div class="c" style="left:1280px;width:142px"><span class="t j" style="width:35px;">启用</span></div><div class="c" style="left:1422px;width:126px;border-right:0"><a class="btn be"><svg width="12.5" height="12.5" viewBox="0 0 12.5 12.5" style="left:9px;top:7.3px"><path fill="#fff" d="M0.2 12.3 L1.3 8.3 L9 0.6 Q9.7 0 10.4 0.6 L12 2.2 Q12.6 2.9 12 3.6 L4.3 11.3 Z"/></svg><span class="t2 j" style="width:30px;">编辑</span></a></div></div>
<div class="r" style="top:547px;height:49px"><div class="c" style="left:0px;width:142px"><span class="t j" style="width:52.5px;">文诗牛</span></div><div class="c" style="left:142px;width:142px"><div class="img"><svg width="20" height="20" viewBox="0 0 20 20" style="left:1px;top:1px"><path d="M0.6 0.6 H13.6 L19.4 5.9 V19.4 H0.6 Z" fill="url(#sky)"/><ellipse cx="7.7" cy="5.7" rx="3.3" ry="1.35" fill="#fff"/><ellipse cx="7.2" cy="4.5" rx="1.9" ry="1.3" fill="#fff"/><path d="M1.2 19.4 C2 14.5 5 11.4 8.6 11.4 C11.4 11.4 13.6 13.2 14.8 15.6 L19.4 12 V19.4 Z" fill="#46a622"/><path d="M13.2 19.4 L19.4 13 V19.4 Z" fill="#5f8f4e"/><path d="M8.6 20.6 L20.4 9.4" stroke="#fff" stroke-width="2.7" fill="none"/><path d="M13.6 0.6 V5.9 H19.4 Z" fill="#fff"/><path d="M13.6 0.3 V5.7 H19.7" fill="none" stroke="#8a8a8a" stroke-width="1.15"/><path d="M13.7 0.7 L19.3 5.8" fill="none" stroke="#b9b9b9" stroke-width="0.9"/><path d="M13.9 0.65 H0.65 V19.35 H8.2" fill="none" stroke="#7b7b7b" stroke-width="1.25"/><path d="M12.4 19.35 H19.35 V14.3 M19.35 5.4 V9.2" fill="none" stroke="#7b7b7b" stroke-width="1.25"/></svg></div><a class="btn bv"><span class="t2 j" style="width:30px;">查看</span></a></div><div class="c" style="left:284px;width:142px"><span class="t">20000</span></div><div class="c" style="left:426px;width:143px"><span class="t">12.00 %</span></div><div class="c" style="left:569px;width:142px"><span class="t">22000</span></div><div class="c" style="left:711px;width:142px"><span class="t">10</span></div><div class="c" style="left:853px;width:142px"><span class="t">8000</span></div><div class="c" style="left:995px;width:143px"><span class="t">128000</span></div><div class="c" style="left:1138px;width:142px"><span class="t">512000</span></div><div class="c" style="left:1280px;width:142px"><span class="t j" style="width:35px;">启用</span></div><div class="c" style="left:1422px;width:126px;border-right:0"><a class="btn be"><svg width="12.5" height="12.5" viewBox="0 0 12.5 12.5" style="left:9px;top:7.3px"><path fill="#fff" d="M0.2 12.3 L1.3 8.3 L9 0.6 Q9.7 0 10.4 0.6 L12 2.2 Q12.6 2.9 12 3.6 L4.3 11.3 Z"/></svg><span class="t2 j" style="width:30px;">编辑</span></a></div></div>
<div class="r" style="top:596px;height:48px"><div class="c" style="left:0px;width:142px"><span class="t j" style="width:52.5px;">星通牛</span></div><div class="c" style="left:142px;width:142px"><div class="img"><svg width="20" height="20" viewBox="0 0 20 20" style="left:1px;top:1px"><path d="M0.6 0.6 H13.6 L19.4 5.9 V19.4 H0.6 Z" fill="url(#sky)"/><ellipse cx="7.7" cy="5.7" rx="3.3" ry="1.35" fill="#fff"/><ellipse cx="7.2" cy="4.5" rx="1.9" ry="1.3" fill="#fff"/><path d="M1.2 19.4 C2 14.5 5 11.4 8.6 11.4 C11.4 11.4 13.6 13.2 14.8 15.6 L19.4 12 V19.4 Z" fill="#46a622"/><path d="M13.2 19.4 L19.4 13 V19.4 Z" fill="#5f8f4e"/><path d="M8.6 20.6 L20.4 9.4" stroke="#fff" stroke-width="2.7" fill="none"/><path d="M13.6 0.6 V5.9 H19.4 Z" fill="#fff"/><path d="M13.6 0.3 V5.7 H19.7" fill="none" stroke="#8a8a8a" stroke-width="1.15"/><path d="M13.7 0.7 L19.3 5.8" fill="none" stroke="#b9b9b9" stroke-width="0.9"/><path d="M13.9 0.65 H0.65 V19.35 H8.2" fill="none" stroke="#7b7b7b" stroke-width="1.25"/><path d="M12.4 19.35 H19.35 V14.3 M19.35 5.4 V9.2" fill="none" stroke="#7b7b7b" stroke-width="1.25"/></svg></div><a class="btn bv"><span class="t2 j" style="width:30px;">查看</span></a></div><div class="c" style="left:284px;width:142px"><span class="t">40000</span></div><div class="c" style="left:426px;width:143px"><span class="t">12.00 %</span></div><div class="c" style="left:569px;width:142px"><span class="t">45000</span></div><div class="c" style="left:711px;width:142px"><span class="t">11</span></div><div class="c" style="left:853px;width:142px"><span class="t">16000000</span></div><div class="c" style="left:995px;width:143px"><span class="t">256000</span></div><div class="c" style="left:1138px;width:142px"><span class="t">1024000</span></div><div class="c" style="left:1280px;width:142px"><span class="t j" style="width:35px;">启用</span></div><div class="c" style="left:1422px;width:126px;border-right:0"><a class="btn be"><svg width="12.5" height="12.5" viewBox="0 0 12.5 12.5" style="left:9px;top:7.3px"><path fill="#fff" d="M0.2 12.3 L1.3 8.3 L9 0.6 Q9.7 0 10.4 0.6 L12 2.2 Q12.6 2.9 12 3.6 L4.3 11.3 Z"/></svg><span class="t2 j" style="width:30px;">编辑</span></a></div></div>
<div class="r" style="top:644px;height:49px"><div class="c" style="left:0px;width:142px"><span class="t j" style="width:52.5px;">冠军牛</span></div><div class="c" style="left:142px;width:142px"><div class="img"><svg width="20" height="20" viewBox="0 0 20 20" style="left:1px;top:1px"><path d="M0.6 0.6 H13.6 L19.4 5.9 V19.4 H0.6 Z" fill="url(#sky)"/><ellipse cx="7.7" cy="5.7" rx="3.3" ry="1.35" fill="#fff"/><ellipse cx="7.2" cy="4.5" rx="1.9" ry="1.3" fill="#fff"/><path d="M1.2 19.4 C2 14.5 5 11.4 8.6 11.4 C11.4 11.4 13.6 13.2 14.8 15.6 L19.4 12 V19.4 Z" fill="#46a622"/><path d="M13.2 19.4 L19.4 13 V19.4 Z" fill="#5f8f4e"/><path d="M8.6 20.6 L20.4 9.4" stroke="#fff" stroke-width="2.7" fill="none"/><path d="M13.6 0.6 V5.9 H19.4 Z" fill="#fff"/><path d="M13.6 0.3 V5.7 H19.7" fill="none" stroke="#8a8a8a" stroke-width="1.15"/><path d="M13.7 0.7 L19.3 5.8" fill="none" stroke="#b9b9b9" stroke-width="0.9"/><path d="M13.9 0.65 H0.65 V19.35 H8.2" fill="none" stroke="#7b7b7b" stroke-width="1.25"/><path d="M12.4 19.35 H19.35 V14.3 M19.35 5.4 V9.2" fill="none" stroke="#7b7b7b" stroke-width="1.25"/></svg></div><a class="btn bv"><span class="t2 j" style="width:30px;">查看</span></a></div><div class="c" style="left:284px;width:142px"><span class="t">80000</span></div><div class="c" style="left:426px;width:143px"><span class="t">12.00 %</span></div><div class="c" style="left:569px;width:142px"><span class="t">85000</span></div><div class="c" style="left:711px;width:142px"><span class="t">12</span></div><div class="c" style="left:853px;width:142px"><span class="t">3000088</span></div><div class="c" style="left:995px;width:143px"><span class="t">5120</span></div><div class="c" style="left:1138px;width:142px"><span class="t">2048000</span></div><div class="c" style="left:1280px;width:142px"><span class="t j" style="width:35px;">启用</span></div><div class="c" style="left:1422px;width:126px;border-right:0"><a class="btn be"><svg width="12.5" height="12.5" viewBox="0 0 12.5 12.5" style="left:9px;top:7.3px"><path fill="#fff" d="M0.2 12.3 L1.3 8.3 L9 0.6 Q9.7 0 10.4 0.6 L12 2.2 Q12.6 2.9 12 3.6 L4.3 11.3 Z"/></svg><span class="t2 j" style="width:30px;">编辑</span></a></div></div>
</div>
<div id="bot"></div><div id="botl"></div>
</body>
</html>
